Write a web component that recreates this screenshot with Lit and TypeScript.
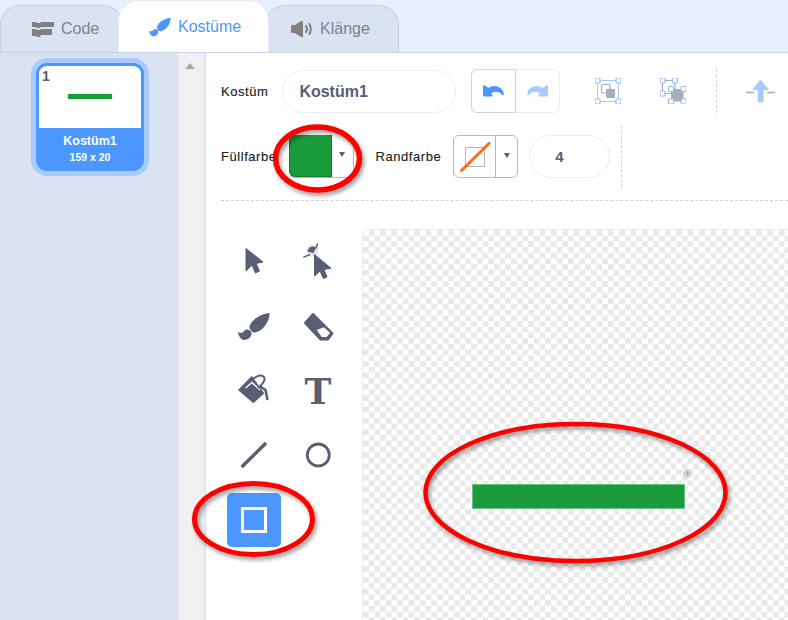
import { LitElement, html, css, svg } from 'lit';
import { customElement } from 'lit/decorators.js';

// brush shape, shared by the costumes tab and the paint tool
const brushPaths = svg`
  <path d="M42.500 13C35 13.500 25 19 22.500 26C22 29 25 33 28.500 32.500C36 31 43 21 42.500 13Z"/>
  <path d="M11 32C14 33.500 16 33 17.500 30.500C19.500 28.500 23 29.500 24.500 32.500C25 36 22 40 17 40C14 40 11.500 36 11 32Z"/>
`;

const undoPath = 'M.5.5Q0 .2 0 1V10Q0 11.500 2 11.500H8.500Q10 11.500 9.400 10L8 8.500Q11 6 15 7Q18 8.200 19 10Q20.300 11 20.800 9Q20.500 3.500 14.500 1.500Q9 0 5.500 3L2.500 1Q1 0 .5.5Z';

@customElement('app-root')
export class AppRoot extends LitElement {
  static styles = css`
    :host {
      display: block;
      position: relative;
      width: 788px;
      height: 620px;
      overflow: hidden;
      background: #e6f0ff;
      font-family: 'Liberation Sans', Arial, sans-serif;
      color: #575e75;
    }

    .tabs {
      display: flex;
      height: 52px;
    }

    .tab {
      display: flex;
      align-items: center;
      box-sizing: border-box;
      height: 47px;
      margin-top: 5px;
      gap: 7px;
      background: #d9e3f2;
      border: 1px solid #c5d0e2;
      border-bottom: none;
      border-radius: 20px 20px 0 0;
      font-size: 16px;
      color: #7d8293;
    }

    .tab.code {
      width: 123px;
      padding-left: 31px;
    }

    .tab.costumes {
      position: relative;
      z-index: 1;
      width: 151px;
      height: 52px;
      margin: 0 0 0 -5px;
      padding: 0 0 0 30px;
      background: #fff;
      border-color: #e3ebf6;
      color: #4c97ff;
    }

    .tab.sounds {
      width: 134px;
      margin-left: -4px;
      padding-left: 25px;
      gap: 8px;
    }

    .body {
      display: flex;
      height: 568px;
      border-top: 1px solid #c9d5e7;
    }

    .sidebar {
      width: 178px;
      flex: none;
      background: #d9e3f2;
    }

    .sprite {
      box-sizing: border-box;
      width: 118px;
      height: 118px;
      margin: 5px 0 0 31px;
      padding: 3px;
      border: 5px solid #a9cbff;
      border-radius: 16px;
      background: #4c97ff;
      color: #fff;
      font-weight: bold;
      text-align: center;
    }

    .thumb {
      display: flex;
      align-items: center;
      justify-content: center;
      position: relative;
      height: 62px;
      border-radius: 8px 8px 0 0;
      background: #fff;
    }

    .thumb i {
      display: block;
      width: 44px;
      height: 5px;
      margin-top: -1px;
      background: #1a9c3c;
      box-shadow: 0 0 3px rgba(0, 0, 0, 0.18);
    }

    .index {
      position: absolute;
      left: 3px;
      top: 2px;
      font-size: 14px;
      color: #575e75;
    }

    .sprite-name {
      margin-top: 6px;
      font-size: 12.5px;
      line-height: 15px;
    }

    .sprite-size {
      font-size: 10.5px;
      line-height: 16px;
    }

    .scrollbar {
      width: 26px;
      flex: none;
      background: #f0f0f0;
    }

    .scrollbar i {
      display: block;
      width: 0;
      margin: 10px 0 0 7px;
      border: 5.5px solid transparent;
      border-top: none;
      border-bottom: 6px solid #a8a8a8;
    }

    .main {
      flex: 1;
      min-width: 0;
      background: #fff;
      border-left: 2px solid #dde5f1;
    }

    .row {
      display: flex;
      align-items: center;
      margin-left: 15px;
    }

    .row.first {
      height: 44px;
      margin-top: 16px;
    }

    .row.second {
      height: 43px;
      margin-top: 22px;
    }

    .label {
      font-size: 13px;
      letter-spacing: 0.55px;
      color: #222;
      white-space: nowrap;
      -webkit-text-stroke: 0.15px #222;
    }

    .name-input {
      box-sizing: border-box;
      width: 174px;
      height: 43px;
      margin-left: 14px;
      padding-left: 16px;
      border: 1px solid #e9eef2;
      border-radius: 22px;
      font-size: 16px;
      font-weight: bold;
      line-height: 41px;
    }

    .history {
      display: flex;
      width: 89px;
      height: 44px;
      box-sizing: border-box;
      margin-left: 15px;
      border: 1px solid #e9eef2;
      border-radius: 6px;
    }

    .history span {
      display: flex;
      align-items: center;
      justify-content: center;
      flex: 1;
    }

    .history .undo {
      margin: -1px 0 -1px -1px;
      border: 1px solid #d4d4d4;
      border-radius: 6px 0 0 6px;
    }

    .arrange {
      display: flex;
      margin-left: 35px;
      gap: 39px;
    }

    .arrange svg {
      display: block;
    }

    .vrule {
      align-self: stretch;
      width: 0;
      border-left: 1px dashed #d0d0d0;
    }

    .vrule.top {
      margin-left: 30px;
    }

    .forward {
      margin-left: 29px;
    }

    .colour {
      display: flex;
      box-sizing: border-box;
      width: 65px;
      height: 43px;
      border: 1px solid #b8b8b8;
      border-radius: 6px;
    }

    .colour.fill {
      margin-left: 12px;
      border-left: none;
      border-top: none;
    }

    .colour.stroke {
      margin-left: 12px;
    }

    .swatch {
      width: 42px;
      box-sizing: border-box;
      border-right: 1px solid #b8b8b8;
    }

    .fill .swatch {
      width: 43px;
      background: #1a9c3c;
      border: 1px solid #137a2e;
      border-top: none;
      border-radius: 0 0 0 6px;
    }

    .stroke .swatch {
      display: flex;
      align-items: center;
      justify-content: center;
    }

    .caret {
      display: flex;
      align-items: center;
      justify-content: center;
      flex: 1;
    }

    .caret i {
      display: block;
      width: 0;
      margin-top: -3px;
      border: 3px solid transparent;
      border-bottom: none;
      border-top: 5px solid #575e75;
    }

    .label.outline {
      margin-left: 22px;
    }

    .width-input {
      box-sizing: border-box;
      width: 81px;
      height: 43px;
      margin-left: 11px;
      padding-left: 25px;
      border: 1px solid #e9eef2;
      border-radius: 22px;
      font-size: 15px;
      font-weight: bold;
      line-height: 41px;
    }

    .vrule.bottom {
      margin: -9px 0 -9px 11px;
    }

    .hrule {
      margin: 22px 0 0 15px;
      border-top: 1px dashed #d0d0d0;
    }

    .workspace {
      display: flex;
      align-items: flex-start;
    }

    .tools {
      display: grid;
      grid-template-columns: 54px 54px;
      grid-auto-rows: 54px;
      gap: 10.5px 10px;
      flex: none;
      margin: 34px 0 0 21px;
    }

    .tool {
      display: flex;
      align-items: center;
      justify-content: center;
      border-radius: 5px;
      fill: #575e75;
    }

    .tool.active {
      background: #4c97ff;
    }

    .tool.glyph {
      font-family: 'DejaVu Serif', serif;
      font-weight: bold;
      font-size: 36px;
      line-height: 54px;
    }

    .canvas {
      position: relative;
      flex: 1;
      height: 391px;
      margin: 28px 0 0 17px;
      border: 1px solid #e6ecf3;
      border-right: none;
      border-bottom: none;
      border-radius: 6px 0 0 0;
      background: repeating-conic-gradient(#e9e9e9 0 25%, #fff 0 50%) 0 0 / 11.4px 11.4px;
    }

    .shape {
      position: absolute;
      left: 109px;
      top: 254px;
      width: 213px;
      height: 25px;
      box-sizing: border-box;
      background: #1a9c3c;
      border: 1px solid #6cc081;
    }

    .handle {
      position: absolute;
      left: 320px;
      top: 239px;
      display: block;
    }

    .marks {
      position: absolute;
      left: 0;
      top: 0;
      z-index: 2;
      pointer-events: none;
      filter: drop-shadow(2px 3px 2px rgba(0, 0, 0, 0.4));
    }

    .marks ellipse {
      fill: none;
      stroke: #f00;
    }
  `;

  private renderHandles(points: number[][]) {
    return points.map(([x, y]) => svg`<rect x=${x - 2.5} y=${y - 2.5} width="5" height="5" rx="1" fill="#fff" stroke="#94bfff" stroke-width="1.2"/>`);
  }

  private renderGroupIcon() {
    return html`<svg width="26" height="26" viewBox="0 0 26 26">
      <rect x="2.500" y="2.500" width="21" height="21" fill="none" stroke="#a6caff"/>
      <rect x="6.500" y="6.500" width="8.500" height="8.500" rx="1" fill="#fff" stroke="#a9adb8" stroke-width="1.200"/>
      <rect x="11" y="11" width="9" height="9" rx="1" fill="#a9adb8"/>
      ${this.renderHandles([[2.5, 2.5], [23.5, 2.5], [2.5, 23.5], [23.5, 23.5]])}
    </svg>`;
  }

  private renderUngroupIcon() {
    return html`<svg width="26" height="26" viewBox="0 0 26 26">
      <rect x="2.500" y="2.500" width="12.500" height="13" fill="none" stroke="#a9adb8" stroke-width="1.200"/>
      <rect x="11" y="11" width="12.500" height="12.500" fill="#a9adb8"/>
      ${this.renderHandles([[2.5, 2.5], [15, 2.5], [2.5, 15.5], [11, 11], [23.5, 11], [11, 23.5], [23.5, 23.5]])}
    </svg>`;
  }

  private renderTools() {
    return html`
      <div class="tools">
        <div class="tool"><svg width="54" height="54">
          <path d="M19 13.500L36 27L29 28.500L32.500 36L28.500 38L25 30L19 36Z" stroke="#575e75" stroke-linejoin="round"/>
        </svg></div>
        <div class="tool"><svg width="54" height="54">
          <circle cx="21.500" cy="15.500" r="6" fill="#e4e6ea"/>
          <path d="M16.500 16.500A5.500 5.500 0 0 1 25 12.500L22.500 18Z"/>
          <path d="M26.700 8.300L25 13.500M12.300 22.300L19 19.500" stroke="#575e75" stroke-width="1.400"/>
          <path d="M23.500 19.500L40 33.300L33 34.500L36 42L32.500 43.500L29 36L23.500 41Z" stroke="#575e75" stroke-linejoin="round"/>
        </svg></div>
        <div class="tool"><svg width="54" height="54">${brushPaths}</svg></div>
        <div class="tool"><svg width="54" height="54">
          <path d="M22 14L41.500 33.500L37 39.500H29.500L14 23Z" stroke="#575e75" stroke-width="2" stroke-linejoin="round"/>
          <path d="M25.700 30L33 27.200L39 32.800L35.700 37H30.700Z" fill="#fff"/>
        </svg></div>
        <div class="tool"><svg width="54" height="54">
          <path d="M24.700 13L12 26L26.300 38.300L36.300 29.300Z" stroke="#575e75" stroke-width="1.500" stroke-linejoin="round"/>
          <path d="M18.500 24L25 18.500L33 26" fill="none" stroke="#fff" stroke-width="1.400"/>
          <path d="M25 17C27 13 33 10 36.500 12.500C39 15 37 19 31 24" fill="none" stroke="#575e75" stroke-width="2"/>
          <path d="M34 23L38.500 26L40.300 35" fill="none" stroke="#575e75" stroke-width="2.500" stroke-linecap="round"/>
        </svg></div>
        <div class="tool glyph">T</div>
        <div class="tool"><svg width="54" height="54">
          <path d="M14.700 38L39 14" stroke="#575e75" stroke-width="3.500"/>
        </svg></div>
        <div class="tool"><svg width="54" height="54">
          <circle cx="27.300" cy="26" r="11" fill="none" stroke="#575e75" stroke-width="2.800"/>
        </svg></div>
        <div class="tool active"><svg width="54" height="54">
          <rect x="15.500" y="15.500" width="23" height="23" fill="none" stroke="#fff" stroke-width="3"/>
        </svg></div>
      </div>
    `;
  }

  protected render() {
    return html`
      <div class="tabs">
        <div class="tab code">
          <svg width="22" height="15" viewBox="0 0 22 15" fill="#808080">
            <path d="M0 0H4L5 1H8L9 0H22V5H9L8 6H5L4 5H0Z"/>
            <path d="M0 7H4L5 8H8L9 7H20V13H9L8 15H5L4 14H0Z"/>
          </svg>
          Code
        </div>
        <div class="tab costumes">
          <svg width="22" height="20" viewBox="11 13 32 27" fill="#4c97ff">${brushPaths}</svg>
          Kostüme
        </div>
        <div class="tab sounds">
          <svg width="21" height="16" viewBox="0 0 21 16" fill="#808080">
            <path d="M0 5Q0 4 1 4H4L10 0Q12-.5 12 1V15Q12 16.500 10 16L4 12H1Q0 12 0 11Z"/>
            <path d="M15 5Q17 8 15 11M18.500 3Q21 8 18.500 13" fill="none" stroke="#808080" stroke-width="2" stroke-linecap="round"/>
          </svg>
          Klänge
        </div>
      </div>

      <div class="body">
        <div class="sidebar">
          <div class="sprite">
            <div class="thumb"><span class="index">1</span><i></i></div>
            <div class="sprite-name">Kostüm1</div>
            <div class="sprite-size">159 x 20</div>
          </div>
        </div>
        <div class="scrollbar"><i></i></div>

        <div class="main">
          <div class="row first">
            <span class="label">Kostüm</span>
            <div class="name-input">Kostüm1</div>
            <div class="history">
              <span class="undo"><svg width="21" height="12" fill="#4c97ff"><path d=${undoPath}/></svg></span>
              <span><svg width="21" height="12" fill="#a6cbff" style="transform: scaleX(-1)"><path d=${undoPath}/></svg></span>
            </div>
            <div class="arrange">
              ${this.renderGroupIcon()}
              ${this.renderUngroupIcon()}
            </div>
            <div class="vrule top"></div>
            <svg class="forward" width="29" height="24" viewBox="0 0 29 24">
              <path d="M0 13.500H8M21 13.500H29" stroke="#a9adb8" stroke-width="1.500"/>
              <path d="M14.300.5L22.500 10Q23 11 21.500 11H17.500V22Q17 23.500 14.300 23.500Q12 23.500 11.700 22V11H7.500Q6 11 6.700 10Z" fill="#a6caff"/>
            </svg>
          </div>

          <div class="row second">
            <span class="label">Füllfarbe</span>
            <div class="colour fill">
              <div class="swatch"></div>
              <div class="caret"><i></i></div>
            </div>
            <span class="label outline">Randfarbe</span>
            <div class="colour stroke">
              <div class="swatch">
                <svg width="34" height="34" viewBox="0 0 34 34">
                  <rect x="7.500" y="7.500" width="19" height="19" fill="none" stroke="#b5b5b5"/>
                  <path d="M2.500 31.500L32 2.500" stroke="#ff6a1a" stroke-width="3"/>
                </svg>
              </div>
              <div class="caret"><i></i></div>
            </div>
            <div class="width-input">4</div>
            <div class="vrule bottom"></div>
          </div>

          <div class="hrule"></div>

          <div class="workspace">
            ${this.renderTools()}
            <div class="canvas">
              <div class="shape"></div>
              <svg class="handle" width="9" height="9">
                <circle cx="4.500" cy="4.500" r="4.500" fill="#d4d4d4"/>
                <path d="M4.500 2V7M2 4.500H7" stroke="#b0b0b0"/>
              </svg>
            </div>
          </div>
        </div>
      </div>

      <svg class="marks" width="788" height="620">
        <ellipse cx="317.500" cy="158.500" rx="42" ry="31.500" stroke-width="5.500"/>
        <ellipse cx="253.500" cy="519" rx="59" ry="35.500" stroke-width="5"/>
        <ellipse cx="575.500" cy="492.500" rx="150" ry="68.500" stroke-width="4.500"/>
      </svg>
    `;
  }
}
